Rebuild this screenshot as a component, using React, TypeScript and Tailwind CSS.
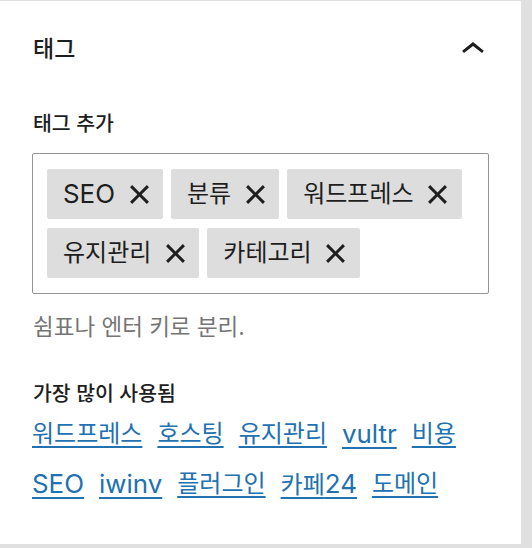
import React from 'react';

const TOKENS = ['SEO', '분류', '워드프레스', '유지관리', '카테고리'];
const MOST_USED = ['워드프레스', '호스팅', '유지관리', 'vultr', '비용', 'SEO', 'iwinv', '플러그인', '카페24', '도메인'];

// latin runs are set a bit larger so they sit next to hangul like the original system font
function Mixed({ text }: { text: string }) {
  const parts = text.split(/([A-Za-z0-9]+)/).filter(Boolean);
  return (
    <>
      {parts.map((p, i) =>
        /^[A-Za-z0-9]+$/.test(p) ? (
          <span key={i} className="text-[1.08em]">{p}</span>
        ) : (
          <React.Fragment key={i}>{p}</React.Fragment>
        )
      )}
    </>
  );
}

function CloseIcon() {
  return (
    <svg width="19" height="19" viewBox="7.2 7.2 9.6 9.6" fill="#1e1e1e">
      <path d="M12 13.06l3.712 3.713 1.061-1.06L13.061 12l3.712-3.712-1.06-1.06L12 10.938 8.288 7.227l-1.061 1.06L10.939 12l-3.712 3.712 1.06 1.061L12 13.061z" />
    </svg>
  );
}

export default function App() {
  return (
    <div className="w-[532px] h-[548px] bg-[#e0e0e0] pt-[1px] font-['Inter','Noto_Sans_CJK_KR',sans-serif] text-[#1e1e1e]">
      <div className="w-[521px] h-[543px] bg-white">
        {/* 헤더 */}
        <div className="flex h-[96px] items-center justify-between pl-[33px] pr-[37px]">
          <h2 className="text-[23px] leading-[30px] font-medium">태그</h2>
          <svg width="22" height="11" viewBox="6.5 8 11 5.6" fill="#1e1e1e" className="mb-[4px]">
            <path d="M6.5 12.4L12 8l5.5 4.4-.9 1.2L12 10l-4.6 3.6-1-1.2z" />
          </svg>
        </div>

        <div className="px-[32px] pt-[15px]">
          <label className="block pl-[1px] text-[20.5px] leading-[24px] font-medium">태그 추가</label>

          {/* 토큰 입력 */}
          <div className="mt-[17px] flex flex-wrap gap-x-[8px] gap-y-[9px] rounded-[2px] border border-[#949494] px-[14px] py-[15px]">
            {TOKENS.map(t => (
              <div key={t} className="flex h-[50px] items-center rounded-[2px] bg-[#dddddd] pl-[16px] text-[24px] leading-[30px]">
                <span><Mixed text={t} /></span>
                <button type="button" className="flex h-[50px] w-[48px] items-center justify-center">
                  <CloseIcon />
                </button>
              </div>
            ))}
          </div>

          <p className="mt-[21px] pl-[1px] text-[22.5px] leading-[24px] text-[#757575]">쉼표나 엔터 키로 분리.</p>

          {/* 가장 많이 사용됨 */}
          <h3 className="mt-[43px] pl-[1px] text-[20.5px] leading-[24px] font-medium">가장 많이 사용됨</h3>
          <div className="mt-[3px] flex flex-wrap gap-x-[15px]">
            {MOST_USED.map(t => (
              <a key={t} href="#" className="block text-[24px] leading-[49px] text-[#2271b1] underline decoration-[2px] underline-offset-[4px]">
                <Mixed text={t} />
              </a>
            ))}
          </div>
        </div>
      </div>
    </div>
  );
}
